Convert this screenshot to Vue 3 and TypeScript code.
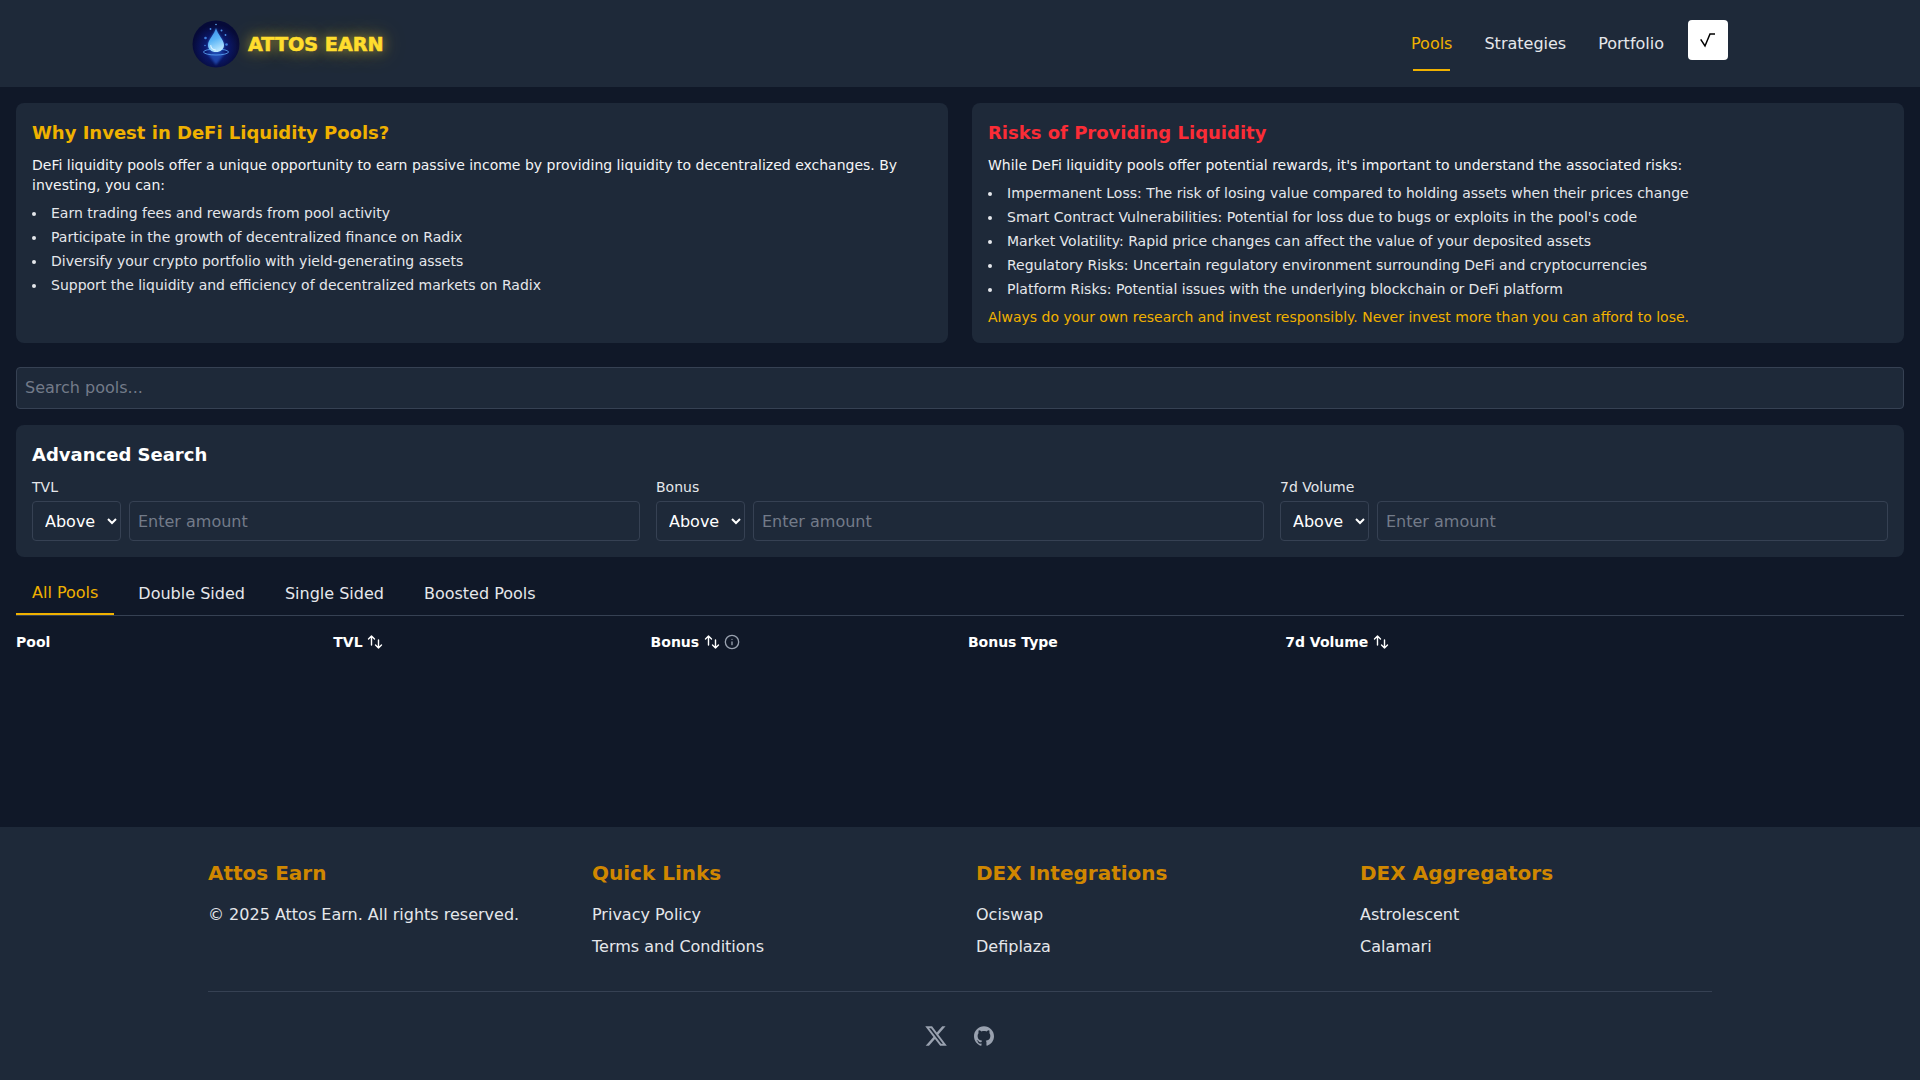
<script setup lang="ts">
import { ref } from 'vue'

const navLinks = ['Pools', 'Strategies', 'Portfolio']
const activeNav = ref('Pools')

const whyItems = [
  'Earn trading fees and rewards from pool activity',
  'Participate in the growth of decentralized finance on Radix',
  'Diversify your crypto portfolio with yield-generating assets',
  'Support the liquidity and efficiency of decentralized markets on Radix'
]

const riskItems = [
  'Impermanent Loss: The risk of losing value compared to holding assets when their prices change',
  'Smart Contract Vulnerabilities: Potential for loss due to bugs or exploits in the pool\'s code',
  'Market Volatility: Rapid price changes can affect the value of your deposited assets',
  'Regulatory Risks: Uncertain regulatory environment surrounding DeFi and cryptocurrencies',
  'Platform Risks: Potential issues with the underlying blockchain or DeFi platform'
]

const filters = ['TVL', 'Bonus', '7d Volume']
const tabs = ['All Pools', 'Double Sided', 'Single Sided', 'Boosted Pools']
const activeTab = ref('All Pools')

const columns = [
  { label: 'Pool', sort: false, info: false },
  { label: 'TVL', sort: true, info: false },
  { label: 'Bonus', sort: true, info: true },
  { label: 'Bonus Type', sort: false, info: false },
  { label: '7d Volume', sort: true, info: false }
]

const footerCols = [
  { title: 'Quick Links', links: ['Privacy Policy', 'Terms and Conditions'] },
  { title: 'DEX Integrations', links: ['Ociswap', 'Defiplaza'] },
  { title: 'DEX Aggregators', links: ['Astrolescent', 'Calamari'] }
]
</script>

<template>
  <div class="page">
    <header class="topbar">
      <div class="topbar-inner">
        <div class="brand">
          <svg class="brand-logo" width="48" height="48" viewBox="0 0 48 48">
            <defs>
              <radialGradient id="orb" cx="50%" cy="58%" r="50%">
                <stop offset="0%" stop-color="#1a4ab8" />
                <stop offset="45%" stop-color="#0c1a70" />
                <stop offset="100%" stop-color="#060a38" />
              </radialGradient>
              <linearGradient id="drop" x1="0.2" y1="0" x2="0.5" y2="1">
                <stop offset="0%" stop-color="#3a8ae6" />
                <stop offset="50%" stop-color="#5ab4f6" />
                <stop offset="100%" stop-color="#bce8ff" />
              </linearGradient>
              <filter id="soft" x="-40%" y="-40%" width="180%" height="180%">
                <feGaussianBlur stdDeviation="1.2" />
              </filter>
            </defs>
            <circle cx="24" cy="24" r="23.5" fill="url(#orb)" />
            <path d="M15 33 L24 45 L33 33 Z" fill="#2a62d0" opacity="0.6" filter="url(#soft)" />
            <path d="M24 8 C25.5 14 32 19 32 25 C32 29.5 28.5 32.5 24 32.5 C19.5 32.5 16 29.5 16 25 C16 19 22.5 14 24 8 Z" fill="#3f8cf0" opacity="0.5" filter="url(#soft)" />
            <ellipse cx="24" cy="32" rx="12.5" ry="3" fill="none" stroke="#5aa2f2" stroke-width="1" opacity="0.85" />
            <path d="M24 8 C25.5 14.5 32 19.5 32 25 C32 29.3 28.4 32 24 32 C19.6 32 16 29.3 16 25 C16 19.5 22.5 14.5 24 8 Z" fill="url(#drop)" />
            <path d="M18.8 25.5 C18.8 28 21 29.8 23.5 30" fill="none" stroke="#e2f5ff" stroke-width="1.1" stroke-linecap="round" />
            <circle cx="24" cy="4.5" r="0.8" fill="#5aa6f0" />
            <circle cx="18.5" cy="9" r="0.9" fill="#4a8fe6" />
            <circle cx="29.5" cy="10.5" r="1" fill="#4a8fe6" />
            <circle cx="13.5" cy="18" r="1.3" fill="#3f7fdc" />
            <circle cx="33.5" cy="15" r="0.9" fill="#4a8fe6" />
            <circle cx="34.5" cy="24.5" r="1.3" fill="#3f7fdc" />
            <circle cx="13" cy="25.5" r="0.8" fill="#3f7fdc" />
          </svg>
          <span class="brand-name">ATTOS EARN</span>
        </div>
        <nav class="nav">
          <a
            v-for="link in navLinks"
            :key="link"
            class="nav-link"
            :class="{ active: link === activeNav }"
            @click="activeNav = link"
          >{{ link }}</a>
          <button class="theme-btn" type="button">
            <svg width="20" height="20" viewBox="0 0 20 20" fill="none" stroke="#000" stroke-width="1.5">
              <path d="M2.7 9.3 L7 16 L12 4 H17" />
            </svg>
          </button>
        </nav>
      </div>
    </header>

    <main class="main">
      <section class="info-grid">
        <article class="card">
          <h2 class="card-title amber">Why Invest in DeFi Liquidity Pools?</h2>
          <p class="card-text">
            DeFi liquidity pools offer a unique opportunity to earn passive income by providing liquidity to decentralized exchanges. By investing, you can:
          </p>
          <ul class="card-list">
            <li v-for="item in whyItems" :key="item">{{ item }}</li>
          </ul>
        </article>
        <article class="card">
          <h2 class="card-title red">Risks of Providing Liquidity</h2>
          <p class="card-text">
            While DeFi liquidity pools offer potential rewards, it's important to understand the associated risks:
          </p>
          <ul class="card-list">
            <li v-for="item in riskItems" :key="item">{{ item }}</li>
          </ul>
          <p class="card-warning">Always do your own research and invest responsibly. Never invest more than you can afford to lose.</p>
        </article>
      </section>

      <input class="search" type="text" placeholder="Search pools..." />

      <section class="advanced">
        <h2 class="advanced-title">Advanced Search</h2>
        <div class="filter-grid">
          <div v-for="f in filters" :key="f" class="filter">
            <label class="filter-label">{{ f }}</label>
            <div class="filter-row">
              <select class="filter-select">
                <option>Above</option>
                <option>Below</option>
              </select>
              <input class="filter-input" type="text" placeholder="Enter amount" />
            </div>
          </div>
        </div>
      </section>

      <div class="tabs">
        <button
          v-for="tab in tabs"
          :key="tab"
          class="tab"
          :class="{ active: tab === activeTab }"
          type="button"
          @click="activeTab = tab"
        >{{ tab }}</button>
      </div>

      <div class="pool-table">
        <div class="pool-head">
          <div v-for="col in columns" :key="col.label" class="pool-cell">
            <span>{{ col.label }}</span>
            <svg v-if="col.sort" class="sort-icon" width="16" height="16" viewBox="0 0 16 16" fill="none" stroke="#fff" stroke-width="1.4" stroke-linecap="round" stroke-linejoin="round">
              <path d="M4.5 11V2M1.5 5l3-3 3 3" />
              <path d="M11.5 6v8M8.5 11l3 3 3-3" />
            </svg>
            <svg v-if="col.info" width="16" height="16" viewBox="0 0 24 24" fill="none" stroke="#99a1af" stroke-width="2" stroke-linecap="round" stroke-linejoin="round">
              <circle cx="12" cy="12" r="10" />
              <path d="M12 16v-4" />
              <path d="M12 8h.01" />
            </svg>
          </div>
        </div>
      </div>
    </main>

    <footer class="footer">
      <div class="footer-inner">
        <div class="footer-grid">
          <div>
            <h3 class="footer-title">Attos Earn</h3>
            <p class="footer-item">© 2025 Attos Earn. All rights reserved.</p>
          </div>
          <div v-for="col in footerCols" :key="col.title">
            <h3 class="footer-title">{{ col.title }}</h3>
            <a v-for="link in col.links" :key="link" class="footer-item">{{ link }}</a>
          </div>
        </div>
        <div class="footer-social">
          <svg width="24" height="24" viewBox="0 0 24 24" fill="#99a1af">
            <path d="M18.244 2.25h3.308l-7.227 8.26 8.502 11.24H16.17l-5.214-6.817L4.99 21.75H1.68l7.73-8.835L1.254 2.25H8.08l4.713 6.231zm-1.161 17.52h1.833L7.084 4.126H5.117z" />
          </svg>
          <svg width="24" height="24" viewBox="-2.4 -2.4 28.8 28.8" fill="#99a1af">
            <path d="M12 .297c-6.63 0-12 5.373-12 12 0 5.303 3.438 9.8 8.205 11.385.6.113.82-.258.82-.577 0-.285-.01-1.04-.015-2.04-3.338.724-4.042-1.61-4.042-1.61C4.422 18.07 3.633 17.7 3.633 17.7c-1.087-.744.084-.729.084-.729 1.205.084 1.838 1.236 1.838 1.236 1.07 1.835 2.809 1.305 3.495.998.108-.776.417-1.305.76-1.605-2.665-.3-5.466-1.332-5.466-5.93 0-1.31.465-2.38 1.235-3.22-.135-.303-.54-1.523.105-3.176 0 0 1.005-.322 3.3 1.23.96-.267 1.98-.399 3-.405 1.02.006 2.04.138 3 .405 2.28-1.552 3.285-1.23 3.285-1.23.645 1.653.24 2.873.12 3.176.765.84 1.23 1.91 1.23 3.22 0 4.61-2.805 5.625-5.475 5.92.42.36.81 1.096.81 2.22 0 1.606-.015 2.896-.015 3.286 0 .315.21.69.825.57C20.565 22.092 24 17.592 24 12.297c0-6.627-5.373-12-12-12" />
          </svg>
        </div>
      </div>
    </footer>
  </div>
</template>

<style scoped>
.page {
  min-height: 100vh;
  background: #101828;
  color: #fff;
  font-family: "DejaVu Sans", sans-serif;
}

.topbar {
  background: #1e2939;
}
.topbar-inner {
  max-width: 1536px;
  height: 87px;
  margin: 0 auto;
  padding-top: 20px;
  box-sizing: border-box;
  display: flex;
  justify-content: space-between;
  align-items: flex-start;
}
.brand {
  display: flex;
  align-items: center;
  gap: 8px;
}
.brand-logo {
  display: block;
}
.brand-name {
  font-weight: 700;
  font-size: 19.2px;
  color: #ffdd2d;
  -webkit-text-stroke: 0.6px #ffdd2d;
  text-shadow: 0 0 12px rgba(255, 221, 45, 0.55), 0 0 24px rgba(255, 221, 45, 0.4);
}
.nav {
  display: flex;
  align-items: flex-start;
}
.nav-link {
  position: relative;
  margin-right: 32px;
  margin-top: 12px;
  font-size: 16px;
  line-height: 24px;
  color: #e5e7eb;
  cursor: pointer;
}
.nav-link:nth-child(3) {
  margin-right: 24px;
}
.nav-link.active {
  color: #f0b100;
}
.nav-link.active::after {
  content: "";
  position: absolute;
  left: 5%;
  right: 5%;
  top: 37px;
  height: 2px;
  background: #f0b100;
}
.theme-btn {
  display: flex;
  align-items: center;
  justify-content: center;
  width: 40px;
  height: 40px;
  padding: 0;
  border: none;
  border-radius: 4px;
  background: #fff;
  cursor: pointer;
}

.main {
  padding: 16px;
}
.info-grid {
  display: grid;
  grid-template-columns: 1fr 1fr;
  gap: 24px;
  margin-bottom: 24px;
}
.card {
  background: #1e2939;
  border-radius: 8px;
  padding: 16px;
}
.card-title {
  margin: 0 0 8px;
  font-size: 18px;
  line-height: 28px;
  font-weight: 700;
}
.amber {
  color: #f0b100;
}
.red {
  color: #fb2c36;
}
.card-text {
  margin: 0 0 8px;
  font-size: 14px;
  line-height: 20px;
  color: #f3f4f6;
}
.card-list {
  margin: 0;
  padding: 0;
  list-style: disc inside;
  font-size: 14px;
  line-height: 20px;
  color: #e5e7eb;
}
.card-list li + li {
  margin-top: 4px;
}
.card-warning {
  margin: 8px 0 0;
  font-size: 14px;
  line-height: 20px;
  color: #f0b100;
}

.search {
  display: block;
  width: 100%;
  height: 42px;
  box-sizing: border-box;
  margin-bottom: 16px;
  padding: 7px 8px 9px;
  background: #1e2939;
  border: 1px solid #364153;
  border-radius: 4px;
  color: #fff;
  font-family: inherit;
  font-size: 16px;
  outline: none;
}
.search::placeholder,
.filter-input::placeholder {
  color: #737b89;
}

.advanced {
  background: #1e2939;
  border-radius: 8px;
  padding: 16px;
  margin-bottom: 16px;
}
.advanced-title {
  margin: 0 0 8px;
  font-size: 18px;
  line-height: 28px;
  font-weight: 700;
}
.filter-grid {
  display: grid;
  grid-template-columns: repeat(3, 1fr);
  gap: 16px;
}
.filter-label {
  display: block;
  margin-bottom: 4px;
  font-size: 14px;
  line-height: 20px;
  color: #e5e7eb;
}
.filter-row {
  display: flex;
  gap: 8px;
}
.filter-select {
  width: 89px;
  height: 40px;
  box-sizing: border-box;
  padding: 8px;
  background: #1e2939;
  border: 1px solid #364153;
  border-radius: 4px;
  color: #fff;
  font-family: inherit;
  font-size: 16px;
}
.filter-input {
  flex: 1;
  min-width: 0;
  height: 40px;
  box-sizing: border-box;
  padding: 8px;
  background: #1e2939;
  border: 1px solid #364153;
  border-radius: 4px;
  color: #fff;
  font-family: inherit;
  font-size: 16px;
  outline: none;
}

.tabs {
  display: flex;
  gap: 8px;
  border-bottom: 1px solid #364153;
}
.tab {
  height: 42px;
  padding: 0 16px;
  background: none;
  border: none;
  color: #e5e7eb;
  font-family: inherit;
  font-size: 16px;
  line-height: 24px;
  cursor: pointer;
}
.tab.active {
  border-bottom: 2px solid #f0b100;
  color: #f0b100;
}

.pool-table {
  min-height: 195px;
}
.pool-head {
  display: grid;
  grid-template-columns: repeat(5, 317.3px) 1fr;
  padding: 16px 0;
}
.pool-cell {
  display: flex;
  align-items: center;
  gap: 4px;
  font-size: 14px;
  line-height: 20px;
  font-weight: 700;
}
.sort-icon {
  margin-left: 0.5px;
}

.footer {
  background: #1e2939;
}
.footer-inner {
  max-width: 1504px;
  margin: 0 auto;
  padding: 32px 0;
}
.footer-grid {
  display: grid;
  grid-template-columns: repeat(4, 1fr);
  gap: 32px;
  padding-bottom: 32px;
  border-bottom: 1px solid #364153;
}
.footer-title {
  margin: 0 0 16px;
  font-size: 20px;
  line-height: 28px;
  font-weight: 700;
  color: #d08700;
}
.footer-item {
  display: block;
  margin: 0;
  font-size: 16px;
  line-height: 24px;
  color: #e5e7eb;
}
.footer-item + .footer-item {
  margin-top: 8px;
}
.footer-social {
  display: flex;
  justify-content: center;
  gap: 24px;
  margin-top: 32px;
}
</style>

<style>
html,
body {
  margin: 0;
  background: #101828;
}
</style>
